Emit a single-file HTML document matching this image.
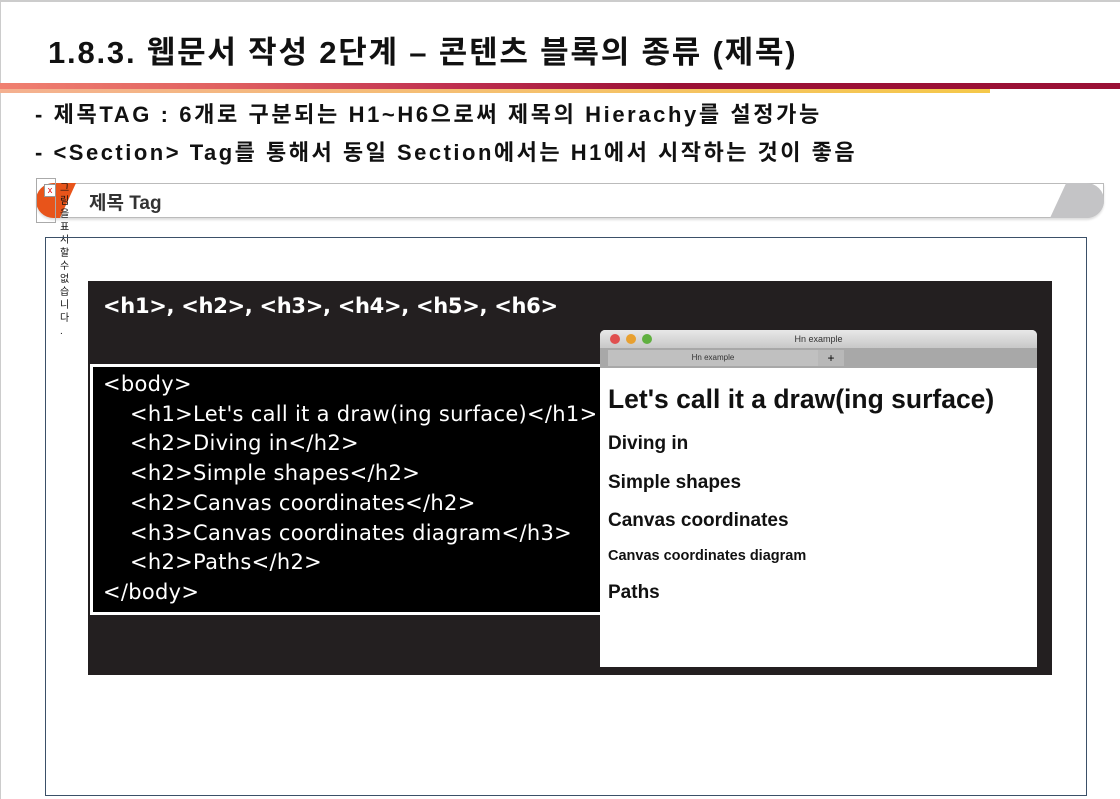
<!DOCTYPE html>
<html><head><meta charset="utf-8"><style>
*{margin:0;padding:0;box-sizing:border-box}
body{width:1120px;height:799px;background:#fff;position:relative;overflow:hidden;font-family:"Liberation Sans","Noto Sans CJK KR",sans-serif}
.a{position:absolute;white-space:nowrap}
</style></head><body>
<div class="a" style="left:0;top:0;width:1120px;height:2px;background:#ccc"></div>
<div class="a" style="left:0;top:0;width:1px;height:799px;background:#ccc"></div>
<div class="a" style="left:48px;top:27px;font-size:31px;font-weight:bold;color:#111;letter-spacing:1.8px">1.8.3. 웹문서 작성 2단계 – 콘텐츠 블록의 종류 (제목)</div>
<div class="a" style="left:0;top:83px;width:1120px;height:6px;background:linear-gradient(90deg,#f08070 0%,#e06060 20%,#c03050 40%,#9a1035 60%,#9a1035 100%)"></div>
<div class="a" style="left:0;top:89px;width:990px;height:4px;background:linear-gradient(90deg,#f4b090,#f5c070 50%,#f5c84a)"></div>
<div class="a" style="left:35px;top:97px;font-size:22px;font-weight:bold;color:#111;letter-spacing:2.6px">- 제목TAG : 6개로 구분되는 H1~H6으로써 제목의 Hierachy를 설정가능</div>
<div class="a" style="left:35px;top:135px;font-size:22px;font-weight:bold;color:#111;letter-spacing:2.5px">- &lt;Section&gt; Tag를 통해서 동일 Section에서는 H1에서 시작하는 것이 좋음</div>
<div class="a" style="left:36px;top:183px;width:1068px;height:35px;border:1px solid #bbb;border-radius:18px 0 18px 18px;background:#fff;box-shadow:0 2px 2px #ddd"></div>
<div class="a" style="left:1050px;top:183px;width:54px;height:35px;background:#c4c4c6;clip-path:polygon(30% 0,100% 0,100% 100%,0 100%);border-radius:0 18px 18px 0"></div>
<div class="a" style="left:36px;top:183px;width:40px;height:35px;background:#e8541a;border-radius:18px 0 0 18px;clip-path:polygon(0 0,100% 0,60% 100%,0 100%)"></div>
<div class="a" style="left:36px;top:178px;width:20px;height:45px;border:1px solid #aaa"></div>
<div class="a" style="left:44px;top:184px;width:12px;height:13px;background:#fff;border:1px solid #999;color:#d00;font-size:9px;line-height:11px;text-align:center">x</div>
<div class="a" style="left:60px;top:182px;width:12px;font-size:10px;line-height:13px;white-space:normal;color:#111">그 림 을 표 시 할 수 없 습 니 다 .</div>
<div class="a" style="left:89px;top:188px;font-size:19px;font-weight:bold;color:#333">제목 Tag</div>
<div class="a" style="left:45px;top:237px;width:1042px;height:559px;border:1px solid #3b5068"></div>
<div class="a" style="left:88px;top:281px;width:964px;height:394px;background:#231f20"></div>
<div class="a" style="left:103px;top:294px;font-size:21px;font-weight:bold;color:#fff;font-family:'DejaVu Sans',sans-serif;letter-spacing:-0.3px">&lt;h1&gt;, &lt;h2&gt;, &lt;h3&gt;, &lt;h4&gt;, &lt;h5&gt;, &lt;h6&gt;</div>
<div class="a" style="left:90px;top:364px;width:515px;height:251px;background:#000;border:3px solid #fff;border-right:none"></div>
<div class="a" style="left:103px;top:370px;font-size:21px;line-height:29.7px;color:#fff;font-family:'DejaVu Sans',sans-serif;letter-spacing:0.3px">&lt;body&gt;<br>
<span style="padding-left:27px">&lt;h1&gt;Let's call it a draw(ing surface)&lt;/h1&gt;</span><br>
<span style="padding-left:27px">&lt;h2&gt;Diving in&lt;/h2&gt;</span><br>
<span style="padding-left:27px">&lt;h2&gt;Simple shapes&lt;/h2&gt;</span><br>
<span style="padding-left:27px">&lt;h2&gt;Canvas coordinates&lt;/h2&gt;</span><br>
<span style="padding-left:27px">&lt;h3&gt;Canvas coordinates diagram&lt;/h3&gt;</span><br>
<span style="padding-left:27px">&lt;h2&gt;Paths&lt;/h2&gt;</span><br>
&lt;/body&gt;</div>
<div class="a" style="left:600px;top:330px;width:437px;height:337px;background:#fff;border-radius:5px 5px 0 0;overflow:hidden">
<div style="height:18px;background:linear-gradient(#e8e8e8,#c8c8c8);font-size:9px;color:#333;text-align:center;line-height:18px;position:relative">Hn example
<span style="position:absolute;left:10px;top:4px;width:10px;height:10px;border-radius:50%;background:#e05050"></span>
<span style="position:absolute;left:26px;top:4px;width:10px;height:10px;border-radius:50%;background:#e8a030"></span>
<span style="position:absolute;left:42px;top:4px;width:10px;height:10px;border-radius:50%;background:#60b040"></span></div>
<div style="height:20px;background:#a8a8a8;position:relative">
<div style="position:absolute;left:8px;top:2px;width:210px;height:16px;background:#c0c0c0;font-size:8px;text-align:center;line-height:16px;color:#333">Hn example</div>
<div style="position:absolute;left:218px;top:2px;width:26px;height:16px;background:#b8b8b8;font-size:12px;text-align:center;line-height:16px">+</div></div>
<div style="position:absolute;left:8px;top:54px;font-size:26.5px;font-weight:bold;color:#111">Let's call it a draw(ing surface)</div>
<div style="position:absolute;left:8px;top:103px;font-size:19px;font-weight:bold;color:#111">Diving in</div>
<div style="position:absolute;left:8px;top:142px;font-size:19px;font-weight:bold;color:#111">Simple shapes</div>
<div style="position:absolute;left:8px;top:180px;font-size:19px;font-weight:bold;color:#111">Canvas coordinates</div>
<div style="position:absolute;left:8px;top:218px;font-size:14.5px;font-weight:bold;color:#111">Canvas coordinates diagram</div>
<div style="position:absolute;left:8px;top:252px;font-size:19px;font-weight:bold;color:#111">Paths</div>
</div>
</body></html>
